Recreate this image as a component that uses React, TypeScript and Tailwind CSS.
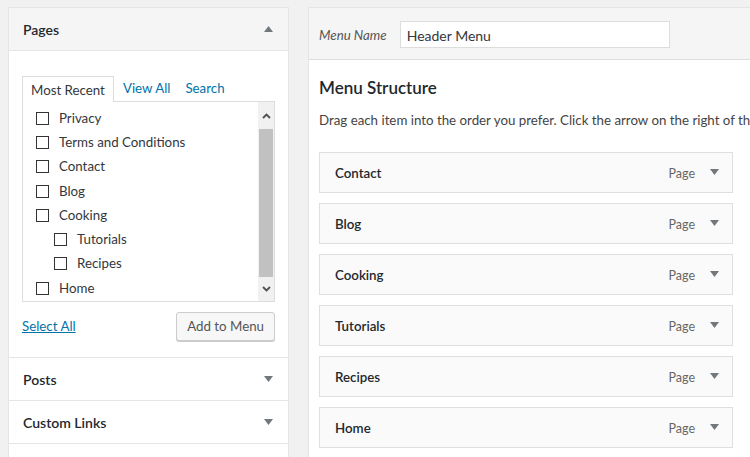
import React from "react";

const font = { fontFamily: 'Lato, "Noto Sans", sans-serif' };

function TriDown({ className = "" }: { className?: string }) {
  return (
    <svg width="9" height="6" viewBox="0 0 9 6" className={className}>
      <path d="M0 0 H9 L4.5 6 Z" fill="#72777c" />
    </svg>
  );
}

function TriUp({ className = "" }: { className?: string }) {
  return (
    <svg width="9" height="6" viewBox="0 0 9 6" className={className}>
      <path d="M0 6 H9 L4.5 0 Z" fill="#72777c" />
    </svg>
  );
}

function Check({ label, nested = false }: { label: string; nested?: boolean }) {
  return (
    <div className={`flex items-center h-[24.3px] ${nested ? "pl-[31px]" : "pl-[13px]"}`}>
      <span className="w-[13px] h-[13px] border border-[#333] bg-white shrink-0" />
      <span className="ml-[10px] text-[13.3px] text-[#32373c] pt-px">{label}</span>
    </div>
  );
}

function MenuItem({ title }: { title: string }) {
  return (
    <div className="w-[414px] h-[41px] border border-[#dfdfdf] bg-[#fafafa] flex items-center pl-[15px] pr-[13px]">
      <span className="text-[13.3px] font-semibold text-[#23282d] pt-[3px]">{title}</span>
      <span className="ml-auto text-[12.5px] text-[#666] pt-[3px]">Page</span>
      <TriDown className="ml-[15px] mb-[2px]" />
    </div>
  );
}

export default function App() {
  return (
    <div
      className="w-[750px] h-[457px] overflow-hidden bg-[#f1f1f1] flex items-start gap-[19px] pt-[7px] pl-[8px]"
      style={font}
    >
      {/* Left column */}
      <div className="w-[281px] shrink-0 border border-[#e5e5e5] bg-white flex flex-col">
        <div className="h-[43px] bg-[#f5f5f5] border-b border-[#e5e5e5] flex items-center pl-[14px] pr-[15px]">
          <span className="text-[14px] font-semibold text-[#23282d]">Pages</span>
          <TriUp className="ml-auto" />
        </div>
        <div className="px-[13px] pt-[24px] pb-[16px] border-b border-[#e5e5e5]">
          <div className="flex items-end text-[13.3px]">
            <div className="relative z-10 -mb-px h-[26px] pt-[2px] px-[8px] border border-b-0 border-[#ddd] bg-white flex items-center text-[#32373c]">
              Most Recent
            </div>
            <span className="ml-[9px] h-[26px] pt-[2px] flex items-center text-[#0073aa]">View All</span>
            <span className="ml-[15px] h-[26px] pt-[2px] flex items-center text-[#0073aa]">Search</span>
          </div>
          <div className="h-[201px] border border-[#ddd] bg-white flex">
            <div className="flex-1 pt-[4px] overflow-hidden">
              <Check label="Privacy" />
              <Check label="Terms and Conditions" />
              <Check label="Contact" />
              <Check label="Blog" />
              <Check label="Cooking" />
              <Check label="Tutorials" nested />
              <Check label="Recipes" nested />
              <Check label="Home" />
            </div>
            <div className="w-[16px] bg-[#f1f1f1] flex flex-col">
              <div className="h-[27px] flex items-center justify-center">
                <svg width="9" height="6" viewBox="0 0 9 6">
                  <path d="M1 5 L4.5 1.5 L8 5" stroke="#505050" strokeWidth="1.8" fill="none" />
                </svg>
              </div>
              <div className="h-[148px] mx-px bg-[#c1c1c1]" />
              <div className="flex-1 flex items-center justify-center">
                <svg width="9" height="6" viewBox="0 0 9 6">
                  <path d="M1 1 L4.5 4.5 L8 1" stroke="#505050" strokeWidth="1.8" fill="none" />
                </svg>
              </div>
            </div>
          </div>
          <div className="flex items-center justify-between mt-[10px]">
            <span className="text-[13.3px] text-[#0073aa] underline pt-px">Select All</span>
            <button className="h-[29px] px-[10px] pt-px text-[13.3px] text-[#555] bg-[#f7f7f7] border border-[#ccc] rounded-[3px] shadow-[0_1px_0_#ccc]">
              Add to Menu
            </button>
          </div>
        </div>
        <div className="h-[43px] border-b border-[#e5e5e5] flex items-center pl-[14px] pr-[15px]">
          <span className="text-[14px] font-semibold text-[#23282d]">Posts</span>
          <TriDown className="ml-auto" />
        </div>
        <div className="h-[43px] border-b border-[#e5e5e5] flex items-center pl-[14px] pr-[15px]">
          <span className="text-[14px] font-semibold text-[#23282d]">Custom Links</span>
          <TriDown className="ml-auto" />
        </div>
        <div className="h-[43px]" />
      </div>

      {/* Right column */}
      <div className="w-[460px] shrink-0 border border-[#e5e5e5] bg-white flex flex-col h-[470px]">
        <div className="h-[52px] bg-[#f5f5f5] border-b border-[#dddddd] flex items-center pl-[10px]">
          <span className="text-[13.3px] italic text-[#555] pt-[5px]">Menu Name</span>
          <div className="ml-[13px] w-[270px] h-[27px] mt-[2px] border border-[#ddd] bg-white flex items-center px-[6px] pt-px text-[14px] text-[#32373c]">
            Header Menu
          </div>
        </div>
        <div className="pl-[10px] pt-[16px]">
          <div className="text-[17px] font-semibold text-[#23282d] leading-[24px]">Menu Structure</div>
          <div className="mt-[11px] text-[13.3px] text-[#444] whitespace-nowrap leading-[18px]">
            Drag each item into the order you prefer. Click the arrow on the right of the item to reveal additional configuration options.
          </div>
          <div className="mt-[23px] flex flex-col gap-[10px]">
            <MenuItem title="Contact" />
            <MenuItem title="Blog" />
            <MenuItem title="Cooking" />
            <MenuItem title="Tutorials" />
            <MenuItem title="Recipes" />
            <MenuItem title="Home" />
          </div>
        </div>
      </div>
    </div>
  );
}
